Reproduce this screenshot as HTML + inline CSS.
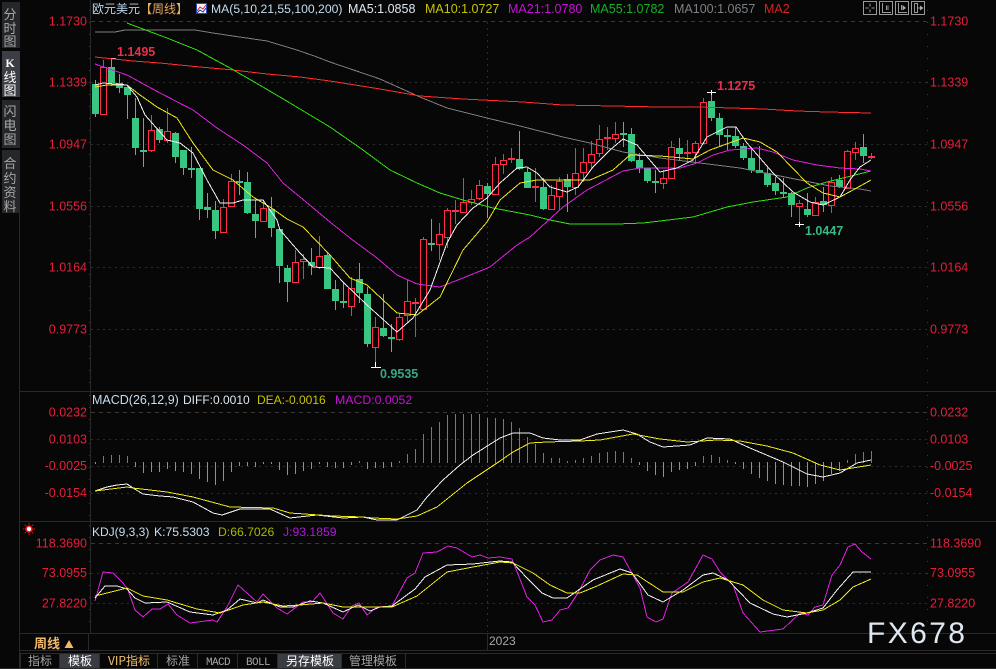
<!DOCTYPE html>
<html><head><meta charset="utf-8"><title>欧元美元 周线</title>
<style>
html,body{margin:0;padding:0;background:#070707;width:996px;height:669px;overflow:hidden}
svg{display:block;position:absolute;left:0;top:0}
text{font-family:"Liberation Sans","Noto Sans CJK SC",sans-serif;font-size:12.5px;white-space:pre}
.r{fill:#e61f3a}
.s{text-anchor:middle;font-size:13px;fill:#a8a8a8;font-family:"WenQuanYi Zen Hei","Noto Sans CJK SC",sans-serif}
.t{font-family:"WenQuanYi Zen Hei","Noto Sans CJK SC",sans-serif;fill:#a4a4a4;text-anchor:middle;font-size:12px}
.l{fill:none;stroke-width:1}
</style></head><body>
<svg width="996" height="669" viewBox="0 0 996 669" xmlns="http://www.w3.org/2000/svg">
<rect width="996" height="669" fill="#070707"/>
<!-- sidebar -->
<rect x="2" y="2" width="18" height="46" fill="#26272b"/>
<rect x="2" y="51" width="18" height="46" fill="#3c3e45"/>
<rect x="2" y="100" width="18" height="48" fill="#26272b"/>
<rect x="2" y="150" width="18" height="63" fill="#26272b"/>
<text class="s" x="10" y="19">分</text><text class="s" x="10" y="33">时</text><text class="s" x="10" y="46">图</text>
<text class="s" x="10" y="67" style="fill:#fff;font-size:12px;font-family:'Liberation Serif',serif;font-weight:700">K</text><text class="s" x="10" y="82" style="fill:#fff">线</text><text class="s" x="10" y="95" style="fill:#fff">图</text>
<text class="s" x="10" y="116">闪</text><text class="s" x="10" y="130">电</text><text class="s" x="10" y="144">图</text>
<text class="s" x="10" y="168">合</text><text class="s" x="10" y="183">约</text><text class="s" x="10" y="197">资</text><text class="s" x="10" y="211">料</text>
<!-- frame lines -->
<g stroke="#29292b" fill="none" shape-rendering="crispEdges">
<path d="M19.5 213V669M90.5 0V633M19.5 391.5H996M19.5 521.5H996M19.5 633.5H996M19.5 650.5H996M19.5 653.5H996M0 668.5H996M88.5 633V650"/>
<path d="M487.5 633V650"/>
</g>
<g stroke="#3a3a3a" fill="none" stroke-dasharray="1 11" shape-rendering="crispEdges">
<path d="M89.5 10V390M89.5 395V520M89.5 525V632M927.5 10V390M927.5 395V520M927.5 525V632"/>
</g>
<!-- grids -->
<g stroke="#2c2c2c" fill="none" shape-rendering="crispEdges" stroke-dasharray="2 4">
<path d="M91 21.5H927M91 412.5H927M91 543.5H927" stroke="#383838" stroke-dasharray="4 4"/>
<path d="M91 82.5H927M91 144.5H927M91 206.5H927M91 267.5H927M91 329.5H927M91 439.5H927M91 466.5H927M91 493.5H927M91 573.5H927M91 603.5H927M487.5 22V391M487.5 393V520M487.5 523V632"/>
</g>
<!-- candles -->
<g shape-rendering="crispEdges">
<path fill="none" stroke="#38c682" d="M95.5 80V117M111.5 58V86M119.5 74V93M127.5 85V119M135.5 98V155M143.5 118V167M159.5 127V143M175.5 132V163M183.5 150V175M191.5 147V178M199.5 168V220M207.5 193V218M215.5 201V239M239.5 170V195M247.5 172V214M255.5 200V238M271.5 197V237M279.5 229V283M287.5 265V302M311.5 248V275M327.5 252V289M335.5 280V310M343.5 283V308M359.5 263V303M367.5 287V347M383.5 294V337M391.5 324V352M431.5 219V251M487.5 183V218M519.5 131V170M527.5 168V188M543.5 178V210M567.5 174V212M623.5 122V147M631.5 128V162M639.5 153V173M647.5 168V183M655.5 170V193M679.5 138V161M711.5 92V121M719.5 113V146M727.5 129V150M735.5 127V148M743.5 143V160M751.5 149V173M759.5 146V173M767.5 167V187M775.5 177V195M783.5 178V197M791.5 192V217M807.5 193V217M823.5 187V212M839.5 175V188M863.5 134V163"/>
<path fill="#38c682" d="M92 84h7V114h-7zM108 67h7V83h-7zM116 83h7V88h-7zM124 87h7V95h-7zM132 118h7V148h-7zM140 150h7V152h-7zM156 129h7V140h-7zM172 133h7V157h-7zM180 150h7V168h-7zM188 168h7V170h-7zM196 168h7V209h-7zM204 207h7V210h-7zM212 210h7V231h-7zM236 181h7V183h-7zM244 182h7V213h-7zM252 214h7V221h-7zM268 209h7V228h-7zM276 229h7V266h-7zM284 268h7V282h-7zM308 262h7V266h-7zM324 255h7V289h-7zM332 289h7V301h-7zM340 301h7V303h-7zM356 279h7V293h-7zM364 294h7V344h-7zM380 328h7V336h-7zM388 337h7V339h-7zM428 243h7V245h-7zM484 186h7V194h-7zM516 159h7V169h-7zM524 172h7V188h-7zM540 187h7V209h-7zM564 179h7V187h-7zM620 133h7V135h-7zM628 134h7V161h-7zM636 160h7V168h-7zM644 168h7V181h-7zM652 181h7V183h-7zM676 148h7V154h-7zM708 101h7V118h-7zM716 118h7V135h-7zM724 135h7V137h-7zM732 136h7V146h-7zM740 146h7V158h-7zM748 158h7V170h-7zM756 170h7V173h-7zM764 173h7V185h-7zM772 183h7V191h-7zM780 192h7V194h-7zM788 193h7V205h-7zM804 209h7V215h-7zM820 201h7V205h-7zM836 180h7V187h-7zM860 147h7V156h-7z"/>
<path fill="none" stroke="#ff2c4c" d="M103.5 60V114M151.5 115V152M167.5 108V143M223.5 199V233M231.5 174V207M263.5 200V221M295.5 250V282M303.5 254V279M319.5 236V269M351.5 277V316M375.5 317V367M399.5 313V341M407.5 280V323M415.5 298V337M423.5 237V309M439.5 223V260M447.5 208V248M455.5 200V224M463.5 178V213M471.5 190V205M479.5 180V200M495.5 157V194M503.5 154V174M511.5 148V163M535.5 168V202M551.5 185V210M559.5 177V210M575.5 148V195M583.5 148V182M591.5 141V169M599.5 125V157M607.5 127V150M615.5 122V143M663.5 170V189M671.5 141V178M687.5 140V163M695.5 141V163M703.5 98V144M799.5 200V224M815.5 197V215M831.5 177V213M847.5 150V188M855.5 142V160M871.5 153V159"/>
<path fill="#070707" stroke="#ff2c4c" d="M100.5 67.5h6V114.5h-6zM148.5 130.5h6V150.5h-6zM164.5 131.5h6V140.5h-6zM220.5 207.5h6V232.5h-6zM228.5 181.5h6V206.5h-6zM260.5 208.5h6V221.5h-6zM292.5 262.5h6V282.5h-6zM300.5 259.5h6V261.5h-6zM316.5 256.5h6V267.5h-6zM348.5 288.5h6V306.5h-6zM372.5 327.5h6V347.5h-6zM396.5 317.5h6V339.5h-6zM404.5 301.5h6V315.5h-6zM412.5 302.5h6V303.5h-6zM420.5 239.5h6V309.5h-6zM436.5 234.5h6V244.5h-6zM444.5 210.5h6V237.5h-6zM452.5 210.5h6V211.5h-6zM460.5 202.5h6V212.5h-6zM468.5 199.5h6V202.5h-6zM476.5 185.5h6V198.5h-6zM492.5 164.5h6V194.5h-6zM500.5 160.5h6V164.5h-6zM508.5 158.5h6V159.5h-6zM532.5 186.5h6V187.5h-6zM548.5 195.5h6V209.5h-6zM556.5 181.5h6V196.5h-6zM572.5 173.5h6V187.5h-6zM580.5 162.5h6V172.5h-6zM588.5 154.5h6V162.5h-6zM596.5 139.5h6V153.5h-6zM604.5 137.5h6V138.5h-6zM612.5 134.5h6V138.5h-6zM660.5 178.5h6V183.5h-6zM668.5 147.5h6V178.5h-6zM684.5 152.5h6V153.5h-6zM692.5 143.5h6V152.5h-6zM700.5 102.5h6V143.5h-6zM796.5 203.5h6V206.5h-6zM812.5 202.5h6V215.5h-6zM828.5 182.5h6V205.5h-6zM844.5 151.5h6V188.5h-6zM852.5 148.5h6V152.5h-6zM868.5 156.5h6V157.5h-6z"/>
<!-- high/low markers -->
<path fill="none" stroke="#fff" d="M108 58.5H116M375.5 362V367M371 367.5H381M707 92.5H716M711.5 90V95M795 224.5H804M799.5 222V227"/>
</g>
<!-- MA lines -->
<g class="lines" fill="none" stroke-width="1" stroke-linejoin="round" shape-rendering="crispEdges">
<polyline stroke="#7e7e7e" points="95,32 115,32 125,30 195,30 213,33 233,36 267,41 297,50 317,57 330,62 380,79 420,97 447,108 487,118 520,126 563,137 590,143 623,152 660,158 700,163 740,168 760,172 800,180 830,186 860,189 871,191"/>
<polyline stroke="#ff2d2d" points="95,57 133,61 160,63 200,67 233,70 267,74 300,77 330,81 380,89 420,96 463,99 523,102 563,105 613,106 660,107 697,107 732,108 763,109 797,111 827,112 871,113"/>
<polyline stroke="#30e010" points="127,23 167,38 197,50 230,68 263,87 290,103 330,127 363,150 390,170 417,183 440,193 463,200 493,208 530,215 550,220 570,224 617,224 643,223 660,221 693,217 727,207 753,202 787,197 807,188 827,182 847,177 871,171"/>
<polyline stroke="#e020e0" points="95,64 127,75 160,93 193,110 217,128 243,145 267,163 283,183 300,197 330,222 350,238 377,258 397,275 417,284 440,287 463,278 490,267 517,245 530,237 563,207 587,190 623,171 640,168 660,168 680,168 697,163 713,155 730,150 757,148 773,152 793,160 817,165 840,168 860,169 871,171"/>
<polyline stroke="#f0e818" points="95,87 107,85 127,85 140,95 157,107 177,118 193,143 213,170 233,180 253,197 270,207 287,219 303,227 330,255 350,278 367,285 397,313 417,315 440,297 463,250 487,222 500,200 520,183 537,180 590,180 613,170 630,155 660,156 693,159 710,150 743,138 760,142 777,152 807,183 823,193 840,197 853,190 871,180"/>
<polyline stroke="#f2f2f2" points="95,85 103,83 127,85 137,97 145,115 167,140 180,143 193,153 207,180 220,203 233,203 243,200 263,200 277,220 280,230 300,253 313,267 330,268 343,282 367,305 397,332 413,318 430,290 447,243 457,225 473,208 487,198 500,183 517,168 527,167 537,173 550,187 567,192 578,187 593,167 610,150 623,139 637,145 660,172 677,168 693,160 707,137 727,127 736,127 747,143 773,173 793,192 810,202 823,205 840,197 850,180 860,167 871,160"/>
</g>
<!-- MACD histogram -->
<g shape-rendering="crispEdges" fill="none">
<path stroke="#3fbc88" d="M95.5 462V464M135.5 462V467M143.5 462V473M151.5 462V472M159.5 462V472M167.5 462V469M175.5 462V471M183.5 462V472M191.5 462V474M199.5 462V479M207.5 462V482M215.5 462V485M223.5 462V481M231.5 462V472M239.5 462V466M247.5 462V466M255.5 462V467M263.5 462V464M271.5 462V464M279.5 462V470M287.5 462V475M295.5 462V474M303.5 462V471M311.5 462V469M319.5 462V464M327.5 462V467M335.5 462V468M343.5 462V468M351.5 462V465M367.5 462V469M375.5 462V468M383.5 462V468M391.5 462V467M639.5 462V465M647.5 462V471M655.5 462V475M663.5 462V477M671.5 462V472M679.5 462V470M687.5 462V469M695.5 462V466M735.5 462V464M743.5 462V469M751.5 462V474M759.5 462V478M767.5 462V481M775.5 462V484M783.5 462V485M791.5 462V486M799.5 462V486M807.5 462V487M815.5 462V484M823.5 462V481M831.5 462V474M839.5 462V471"/>
<path stroke="#e4485f" d="M103.5 456V463M111.5 455V463M119.5 455V463M127.5 456V463M359.5 461V463M399.5 461V463M407.5 454V463M415.5 449V463M423.5 434V463M431.5 427V463M439.5 422V463M447.5 415V463M455.5 414V463M463.5 414V463M471.5 414V463M479.5 414V463M487.5 418V463M495.5 418V463M503.5 419V463M511.5 422V463M519.5 428V463M527.5 437V463M535.5 444V463M543.5 453V463M551.5 458V463M559.5 458V463M567.5 461V463M575.5 460V463M583.5 458V463M591.5 456V463M599.5 453V463M607.5 452V463M615.5 451V463M623.5 452V463M631.5 458V463M703.5 456V463M711.5 455V463M719.5 457V463M727.5 460V463M847.5 460V463M855.5 454V463M863.5 452V463M871.5 451V463"/>
</g>
<g fill="none" shape-rendering="crispEdges" stroke-linejoin="round">
<polyline stroke="#f2f2f2" points="95,491 107,487 117,485 127,484 133,488 143,494 160,496 173,497 193,502 213,513 222,515 240,509 270,509 290,518 317,515 343,518 363,517 377,520 397,520 417,510 427,497 443,480 460,465 473,455 500,438 513,433 530,433 543,438 560,440 580,440 597,434 623,430 637,434 650,442 663,447 690,445 707,438 730,439 750,448 783,462 807,474 823,477 840,473 857,463 871,460"/>
<polyline stroke="#f0e818" points="95,491 127,487 133,488 167,492 193,497 230,507 273,508 290,513 333,516 363,517 373,518 397,519 417,516 437,507 467,483 500,461 513,452 530,443 547,442 580,441 600,440 633,434 660,439 687,442 717,440 740,441 767,446 793,453 820,465 840,470 871,465"/>
<!-- KDJ -->
<polyline stroke="#e020e0" points="95,601 103,572 113,573 123,583 128,590 135,610 143,617 152,609 160,609 168,604 177,615 190,623 213,620 217,622 227,607 238,585 257,602 263,594 277,608 287,614 303,602 312,602 320,593 333,613 343,619 352,606 359,603 367,615 377,607 392,606 407,578 415,573 423,553 437,552 448,546 457,548 472,557 480,555 488,558 500,557 512,559 527,597 535,605 543,622 552,620 560,610 568,608 578,593 590,570 600,560 613,555 623,557 640,588 647,617 656,622 663,619 672,593 688,582 703,555 712,559 720,572 733,585 743,613 760,632 783,629 800,613 808,615 815,607 823,605 832,575 840,565 848,547 855,544 862,552 871,559"/>
<polyline stroke="#f2f2f2" points="95,598 105,586 117,586 127,589 135,598 145,603 167,602 190,612 213,615 227,610 240,599 257,603 263,600 280,607 293,607 310,601 323,603 343,612 358,605 370,611 380,607 392,606 415,589 425,577 447,565 473,564 500,561 512,562 527,578 542,593 553,598 567,598 593,580 620,569 632,573 648,595 663,602 683,590 703,575 713,573 728,580 750,603 773,614 787,617 807,613 823,608 837,590 853,572 871,572"/>
<polyline stroke="#f0e818" points="95,596 127,588 143,596 167,600 197,609 220,613 243,605 263,602 283,606 300,605 323,603 343,607 392,607 417,596 447,572 473,567 500,562 513,563 533,573 550,585 567,593 580,593 597,586 623,574 637,575 663,592 683,592 703,582 720,578 743,585 763,600 783,610 807,613 823,610 840,600 853,587 871,579"/>
</g>
<!-- axis labels left -->
<g class="r" text-anchor="end">
<text class="r" x="87" y="25.5">1.1730</text><text class="r" x="87" y="86.5">1.1339</text><text class="r" x="87" y="148.5">1.0947</text><text class="r" x="87" y="210.5">1.0556</text><text class="r" x="87" y="271.5">1.0164</text><text class="r" x="87" y="333.5">0.9773</text>
<text class="r" x="87" y="416.5">0.0232</text><text class="r" x="87" y="443.5">0.0103</text><text class="r" x="87" y="470">-0.0025</text><text class="r" x="87" y="497">-0.0154</text>
<text class="r" x="87" y="547.5">118.3690</text><text class="r" x="87" y="577">73.0955</text><text class="r" x="87" y="607.5">27.8220</text>
</g>
<!-- axis labels right -->
<g>
<text class="r" x="930" y="25.5">1.1730</text><text class="r" x="930" y="86.5">1.1339</text><text class="r" x="930" y="148.5">1.0947</text><text class="r" x="930" y="210.5">1.0556</text><text class="r" x="930" y="271.5">1.0164</text><text class="r" x="930" y="333.5">0.9773</text>
<text class="r" x="930" y="416.5">0.0232</text><text class="r" x="930" y="443.5">0.0103</text><text class="r" x="930" y="470">-0.0025</text><text class="r" x="930" y="497">-0.0154</text>
<text class="r" x="930" y="547.5">118.3690</text><text class="r" x="930" y="577">73.0955</text><text class="r" x="930" y="607.5">27.8220</text>
</g>
<!-- price flags -->
<text x="117" y="56" font-weight="700" fill="#e8304a">1.1495</text>
<text x="717" y="90" font-weight="700" fill="#e8304a">1.1275</text>
<text x="380" y="378" font-weight="700" fill="#35a88a">0.9535</text>
<text x="805" y="235" font-weight="700" fill="#38b884">1.0447</text>
<!-- header -->
<text x="92" y="13" fill="#b9d3e8" style="font-size:12px">欧元美元</text>
<text x="140" y="13" fill="#e6ad5e" style="font-size:12px">【周线】</text>
<rect x="196.5" y="3.5" width="10" height="10" fill="#f4f4f4" stroke="#2a4cc0" shape-rendering="crispEdges"/>
<polyline points="197,11 200,7 203,9 206,5" fill="none" stroke="#e02020"/>
<polyline points="197,13 200,10 203,12 206,8" fill="none" stroke="#2030c0"/>
<text x="211" y="13" fill="#c5ddf0" style="font-size:12.2px">MA(5,10,21,55,100,200)</text>
<text x="348" y="13" fill="#dce8f2">MA5:1.0858</text>
<text x="425" y="13" fill="#c8c400">MA10:1.0727</text>
<text x="508" y="13" fill="#c810d8">MA21:1.0780</text>
<text x="590" y="13" fill="#14b028">MA55:1.0782</text>
<text x="674" y="13" fill="#7c8084">MA100:1.0657</text>
<text x="764" y="13" fill="#dc2020">MA2</text>
<!-- buttons -->
<g fill="none" stroke="#9a9a9a" shape-rendering="crispEdges">
<rect x="863.5" y="1.5" width="13" height="13"/><rect x="879.5" y="1.5" width="13" height="13"/><rect x="895.5" y="1.5" width="13" height="13"/><rect x="911.5" y="1.5" width="13" height="13"/>
<path d="M870 3.5V6.5M870 9.5V12.5M865.5 8H868.5M871.5 8H874.5"/>
<path d="M882.5 3V12.5H891M886.5 5.5V10M888 5.5V10"/>
<path d="M898.5 3V12.5H907M901.5 5V10"/>
<path d="M914.5 3.5V12.5H917.5V3.5H914.5M918 8H923"/>
</g>
<path d="M902.5 5L906 8L902.5 10.5z" fill="#aaa"/>
<path d="M920 5.5L923.5 8L920 10.5z" fill="#aaa"/>
<!-- MACD labels -->
<text x="92" y="404" fill="#c5ddf0">MACD(26,12,9)</text>
<text x="183" y="404" fill="#dce8f2" style="font-size:12px">DIFF:0.0010</text>
<text x="257" y="404" fill="#c8c400" style="font-size:12px">DEA:-0.0016</text>
<text x="335" y="404" fill="#c810d8" style="font-size:12.3px">MACD:0.0052</text>
<!-- KDJ labels -->
<text x="92" y="536" fill="#c5ddf0" style="font-size:12px">KDJ(9,3,3)</text>
<text x="154" y="536" fill="#c5ddf0" style="font-size:12.2px">K:75.5303</text>
<text x="218" y="536" fill="#a8b800" style="font-size:12.2px">D:66.7026</text>
<text x="283" y="536" fill="#b018d8" style="font-size:12.2px">J:93.1859</text>
<!-- red indicator -->
<circle cx="29" cy="529" r="3" fill="#fff" stroke="#ee1010" stroke-width="1.6"/>
<g stroke="#e01818" stroke-width="1" fill="none">
<path d="M29 523V524.5M29 533.5V535M23 529H24.5M33.5 529H35M24.7 524.7L25.8 525.8M32.2 532.2L33.3 533.3M33.3 524.7L32.2 525.8M25.8 532.2L24.7 533.3"/>
</g>
<!-- bottom bar -->
<text x="34" y="648" style="font-size:13px" font-weight="700" fill="#f0b868">周线</text>
<path d="M64.5 648L69 640L73.5 648z" fill="#f0b868"/>
<text x="489" y="645" fill="#a8a8a8" style="font-size:12px">2023</text>
<text x="867" y="643" fill="#dfe8f2" style="font-size:30px;letter-spacing:2.4px">FX678</text>
<!-- tabs -->
<rect x="60" y="654" width="39" height="14" fill="#3a3c44"/>
<rect x="278" y="654" width="63" height="14" fill="#3a3c44"/>
<g stroke="#2c2c2c" shape-rendering="crispEdges"><path d="M20.5 654V668M59.5 654V668M99.5 654V668M157.5 654V668M197.5 654V668M237.5 654V668M277.5 654V668M341.5 654V668M405.5 654V668"/></g>
<text class="t" x="40" y="665">指标</text>
<text class="t" x="80" y="665" style="fill:#fff">模板</text>
<text class="t" x="129" y="665" style="fill:#f0c070">VIP指标</text>
<text class="t" x="178" y="665">标准</text>
<text class="t" x="218" y="665" style="font-family:'Liberation Mono',monospace;font-size:11px;letter-spacing:-0.6px">MACD</text>
<text class="t" x="258" y="665" style="font-family:'Liberation Mono',monospace;font-size:11px;letter-spacing:-0.6px">BOLL</text>
<text class="t" x="310" y="665" style="fill:#fff">另存模板</text>
<text class="t" x="373" y="665">管理模板</text>
</svg>
</body></html>
